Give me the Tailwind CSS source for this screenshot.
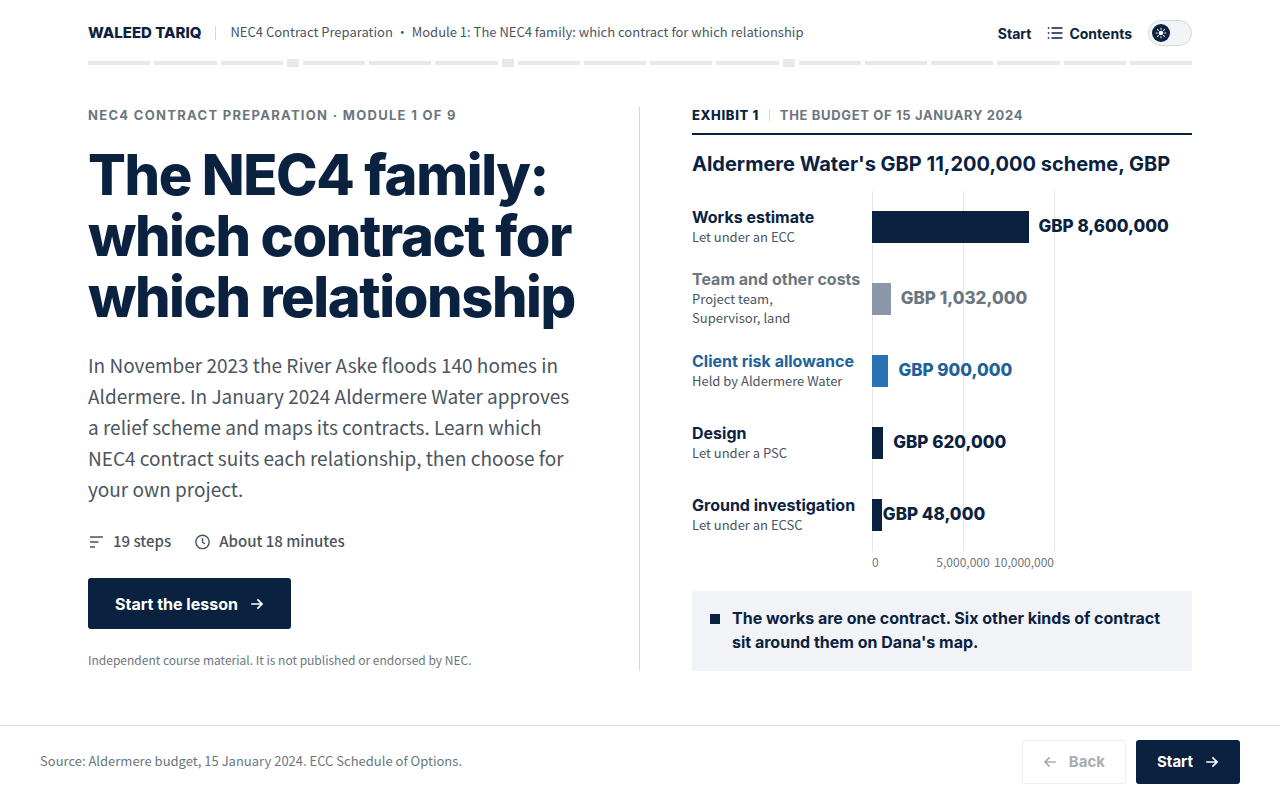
<!DOCTYPE html>
<html lang="en">
<head>
<meta charset="utf-8" />
<meta name="viewport" content="width=device-width, initial-scale=1" />
<title>The NEC4 family | NEC4 Contract Preparation</title>
<script src="https://cdn.jsdelivr.net/npm/@tailwindcss/browser@4"></script>
</head>
<body class="flex flex-col min-h-screen bg-white text-[#0a2240] font-['Inter',sans-serif]">

<header class="w-full max-w-[1184px] mx-auto px-10 pt-5">
  <div class="flex items-center justify-between h-[26px]">
    <div class="flex items-center">
      <a href="#" class="text-[15px] leading-5 font-extrabold">WALEED TARIQ</a>
      <span class="w-px h-3.5 mx-3.5 bg-[#d5d8db]"></span>
      <p class="pb-0.5 text-[13px] leading-5 text-[#4a5560] font-['Noto_Sans_CJK_SC',sans-serif]">NEC4 Contract Preparation · Module 1: The NEC4 family: which contract for which relationship</p>
    </div>
    <nav class="flex items-center gap-4 text-[14px] font-bold">
      <a href="#lesson">Start</a>
      <button type="button" class="flex items-center gap-1.5 font-bold">
        <svg class="size-4" viewBox="0 0 16 16" fill="none" stroke="currentColor" stroke-width="1.4"><path d="M4.5 3h11M4.5 8h11M4.5 13h11M.8 3h1.5M.8 8h1.5M.8 13h1.5"/></svg>
        Contents
      </button>
      <button type="button" role="switch" aria-checked="false" aria-label="Dark theme" class="flex items-center w-11 h-[26px] pl-[3px] rounded-full border border-[#d5d8db] bg-[#f1f3f7]">
        <span class="flex items-center justify-center size-[18px] rounded-full bg-[#0a2240] text-white">
          <svg class="size-3" viewBox="0 0 12 12" fill="none" stroke="currentColor" stroke-width="1.1" stroke-linecap="round"><circle cx="6" cy="6" r="2.3" fill="currentColor" stroke="none"/><path d="M6 1.2v1M6 9.8v1M1.2 6h1M9.8 6h1M2.6 2.6l.7.7M8.7 8.7l.7.7M2.6 9.4l.7-.7M8.7 3.3l.7-.7"/></svg>
        </span>
      </button>
    </nav>
  </div>

  <!-- lesson progress: bars are steps, squares are checkpoints -->
  <div class="flex items-center gap-1 mt-[13px] h-2">
    <span class="flex-1 h-1 bg-[#e6e8e9]"></span>
    <span class="flex-1 h-1 bg-[#e6e8e9]"></span>
    <span class="flex-1 h-1 bg-[#e6e8e9]"></span>
    <span class="w-3 h-2 bg-[#e6e8e9]"></span>
    <span class="flex-1 h-1 bg-[#e6e8e9]"></span>
    <span class="flex-1 h-1 bg-[#e6e8e9]"></span>
    <span class="flex-1 h-1 bg-[#e6e8e9]"></span>
    <span class="w-3 h-2 bg-[#e6e8e9]"></span>
    <span class="flex-1 h-1 bg-[#e6e8e9]"></span>
    <span class="flex-1 h-1 bg-[#e6e8e9]"></span>
    <span class="flex-1 h-1 bg-[#e6e8e9]"></span>
    <span class="flex-1 h-1 bg-[#e6e8e9]"></span>
    <span class="w-3 h-2 bg-[#e6e8e9]"></span>
    <span class="flex-1 h-1 bg-[#e6e8e9]"></span>
    <span class="flex-1 h-1 bg-[#e6e8e9]"></span>
    <span class="flex-1 h-1 bg-[#e6e8e9]"></span>
    <span class="flex-1 h-1 bg-[#e6e8e9]"></span>
    <span class="flex-1 h-1 bg-[#e6e8e9]"></span>
    <span class="flex-1 h-1 bg-[#e6e8e9]"></span>
  </div>
</header>

<main class="flex-1 w-full max-w-[1184px] mx-auto px-10 pt-10 pb-10">
  <div class="grid grid-cols-2">
    <section class="pr-12 border-r border-[#d5d8db]">
      <p class="text-[13px] leading-4 font-bold tracking-widest text-[#6b7680]">NEC4 CONTRACT PREPARATION · MODULE 1 OF 9</p>
      <h1 class="mt-[22px] text-[56px] leading-[61px] font-extrabold tracking-tight">The NEC4 family:<br>which contract for<br>which relationship</h1>
      <p class="mt-[21px] max-w-[490px] text-[19px] leading-[31px] text-[#4a5560] font-['Noto_Sans_CJK_SC',sans-serif]">In November 2023 the River Aske floods 140 homes in Aldermere. In January 2024 Aldermere Water approves a relief scheme and maps its contracts. Learn which NEC4 contract suits each relationship, then choose for your own project.</p>
      <ul class="flex gap-[23px] mt-[27px] text-[15px] leading-5 font-medium text-[#4a5560] font-['Noto_Sans_CJK_SC',sans-serif]">
        <li class="flex items-center gap-2">
          <svg class="size-[17px]" viewBox="0 0 17 17" fill="none" stroke="currentColor" stroke-width="1.5"><path d="M2 4h13M2 9h8.5M2 14h5"/></svg>
          19 steps
        </li>
        <li class="flex items-center gap-2">
          <svg class="size-[17px]" viewBox="0 0 17 17" fill="none" stroke="currentColor" stroke-width="1.4"><circle cx="8.5" cy="8.9" r="6.7"/><path d="M8.5 5v4.2l2.4 1.7"/></svg>
          About 18 minutes
        </li>
      </ul>
      <a href="#lesson" class="inline-flex items-center gap-3 h-[51px] mt-[27px] px-[27px] rounded-[3px] bg-[#0a2240] text-white text-[16px] font-bold">
        Start the lesson
        <svg class="size-3.5" viewBox="0 0 14 14" fill="none" stroke="currentColor" stroke-width="1.7"><path d="M1.2 7h10.6M7.4 2.4L12 7l-4.6 4.6"/></svg>
      </a>
      <p class="mt-[21px] text-[12px] leading-5 text-[#6b7680] font-['Noto_Sans_CJK_SC',sans-serif]">Independent course material. It is not published or endorsed by NEC.</p>
    </section>

    <figure class="pl-[52px]">
      <figcaption>
        <p class="flex items-center pb-2.5 border-b-2 text-[13px] leading-4 font-bold">
          <span class="font-extrabold tracking-wider">EXHIBIT 1</span>
          <span class="w-px h-3 mx-2.5 bg-[#d5d8db]"></span>
          <span class="tracking-wider text-[#6b7680]">THE BUDGET OF 15 JANUARY 2024</span>
        </p>
        <h2 class="mt-[15px] text-[20px] leading-7 font-bold">Aldermere Water's GBP 11,200,000 scheme, GBP</h2>
      </figcaption>

      <div class="relative mt-[13px]">
        <!-- gridlines sit behind the rows -->
        <div class="absolute inset-y-0 left-[180px] right-[137px] flex justify-between">
          <span class="w-px bg-[#e3e5e8]"></span>
          <span class="w-px bg-[#e3e5e8]"></span>
          <span class="w-px bg-[#e3e5e8]"></span>
        </div>
        <ul class="relative">
          <li class="grid grid-cols-[180px_1fr] items-center h-[72px] pr-[138px]">
            <div class="pr-3 pb-0.5">
              <h3 class="text-[16px] leading-5 font-bold whitespace-nowrap">Works estimate</h3>
              <p class="text-[13px] leading-[19px] text-[#4a5560] font-['Noto_Sans_CJK_SC',sans-serif]">Let under an ECC</p>
            </div>
            <div class="flex items-center">
              <div class="shrink-0" style="width:86%"><div class="h-8 min-w-2.5 bg-[#0a2240]"></div></div>
              <span class="ml-2.5 text-[17px] font-extrabold whitespace-nowrap">GBP 8,600,000</span>
            </div>
          </li>
          <li class="grid grid-cols-[180px_1fr] items-center h-[72px] pr-[138px]">
            <div class="pr-3 pb-0.5">
              <h3 class="text-[16px] leading-5 font-bold whitespace-nowrap text-[#6b7680]">Team and other costs</h3>
              <p class="text-[13px] leading-[19px] text-[#4a5560] font-['Noto_Sans_CJK_SC',sans-serif]">Project team,<br>Supervisor, land</p>
            </div>
            <div class="flex items-center">
              <div class="shrink-0" style="width:10.32%"><div class="h-8 min-w-2.5 bg-[#8a97a6]"></div></div>
              <span class="ml-2.5 text-[17px] font-extrabold whitespace-nowrap text-[#6b7680]">GBP 1,032,000</span>
            </div>
          </li>
          <li class="grid grid-cols-[180px_1fr] items-center h-[72px] pr-[138px]">
            <div class="pr-3 pb-0.5">
              <h3 class="text-[16px] leading-5 font-bold whitespace-nowrap text-[#1f6199]">Client risk allowance</h3>
              <p class="text-[13px] leading-[19px] text-[#4a5560] font-['Noto_Sans_CJK_SC',sans-serif]">Held by Aldermere Water</p>
            </div>
            <div class="flex items-center">
              <div class="shrink-0" style="width:9%"><div class="h-8 min-w-2.5 bg-[#2a72b5]"></div></div>
              <span class="ml-2.5 text-[17px] font-extrabold whitespace-nowrap text-[#1f6199]">GBP 900,000</span>
            </div>
          </li>
          <li class="grid grid-cols-[180px_1fr] items-center h-[72px] pr-[138px]">
            <div class="pr-3 pb-0.5">
              <h3 class="text-[16px] leading-5 font-bold whitespace-nowrap">Design</h3>
              <p class="text-[13px] leading-[19px] text-[#4a5560] font-['Noto_Sans_CJK_SC',sans-serif]">Let under a PSC</p>
            </div>
            <div class="flex items-center">
              <div class="shrink-0" style="width:6.2%"><div class="h-8 min-w-2.5 bg-[#0a2240]"></div></div>
              <span class="ml-2.5 text-[17px] font-extrabold whitespace-nowrap">GBP 620,000</span>
            </div>
          </li>
          <li class="grid grid-cols-[180px_1fr] items-center h-[72px] pr-[138px]">
            <div class="pr-3 pb-0.5">
              <h3 class="text-[16px] leading-5 font-bold whitespace-nowrap">Ground investigation</h3>
              <p class="text-[13px] leading-[19px] text-[#4a5560] font-['Noto_Sans_CJK_SC',sans-serif]">Let under an ECSC</p>
            </div>
            <div class="flex items-center">
              <div class="shrink-0" style="width:0.48%"><div class="h-8 w-2.5 bg-[#0a2240]"></div></div>
              <span class="ml-2.5 text-[17px] font-extrabold whitespace-nowrap">GBP 48,000</span>
            </div>
          </li>
        </ul>
      </div>
      <div class="flex justify-between ml-[180px] mr-[138px] mt-[3px] text-[12px] leading-4 text-[#6b7680] font-['Noto_Sans_CJK_SC',sans-serif]">
        <span class="flex-1">0</span>
        <span>5,000,000</span>
        <span class="flex-1 text-right">10,000,000</span>
      </div>

      <div class="flex gap-3 mt-[21px] px-[18px] pt-[15px] pb-[17px] bg-[#f1f3f7]">
        <span class="shrink-0 size-2.5 mt-2 bg-[#0a2240]"></span>
        <p class="text-[16px] leading-6 font-bold">The works are one contract. Six other kinds of contract sit around them on Dana's map.</p>
      </div>
    </figure>
  </div>
</main>

<footer class="flex items-center justify-between px-10 pt-3.5 pb-4 border-t border-[#d5d8db]">
  <p class="pb-0.5 text-[13px] leading-5 text-[#6b7680] font-['Noto_Sans_CJK_SC',sans-serif]">Source: Aldermere budget, 15 January 2024. ECC Schedule of Options.</p>
  <div class="flex gap-2.5 text-[15px] font-bold">
    <button type="button" disabled class="flex items-center gap-3 h-11 px-5 rounded-[3px] border border-[#eef0f1] text-[#a9adb2]">
      <svg class="size-3.5" viewBox="0 0 14 14" fill="none" stroke="currentColor" stroke-width="1.7"><path d="M12.8 7H2.2M6.6 2.4L2 7l4.6 4.6"/></svg>
      Back
    </button>
    <button type="button" class="flex items-center gap-3 h-11 px-[21px] rounded-[3px] bg-[#0a2240] text-white">
      Start
      <svg class="size-3.5" viewBox="0 0 14 14" fill="none" stroke="currentColor" stroke-width="1.7"><path d="M1.2 7h10.6M7.4 2.4L12 7l-4.6 4.6"/></svg>
    </button>
  </div>
</footer>

</body>
</html>
